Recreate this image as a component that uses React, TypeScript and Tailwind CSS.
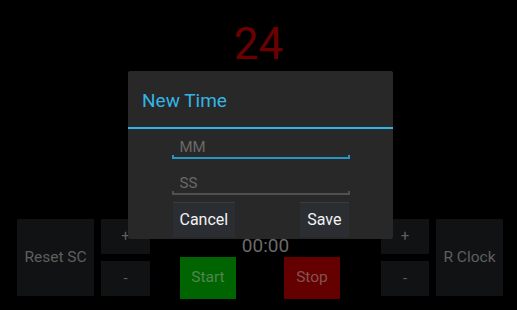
import React from "react";

const font = { fontFamily: "Roboto, 'Noto Sans', sans-serif" };

const SmallButton = ({ label }: { label: string }) => (
  <div className="flex h-[35px] w-full items-center justify-center bg-[#111213] text-[15px] text-[#5f5f5f]">
    {label}
  </div>
);

const Field = ({ hint, active }: { hint: string; active?: boolean }) => (
  <div className="w-[178px]">
    <div className="pl-[8px] text-[15px] leading-[15px] text-[#6a6a6a]">{hint}</div>
    <div
      className={`h-[4px] border-x-2 border-b-2 ${
        active ? "border-[#2596c6]" : "border-[#505050]"
      }`}
    />
  </div>
);

export default function App() {
  return (
    <div className="relative h-[310px] w-[517px] overflow-hidden bg-black" style={font}>
      <div className="flex flex-col">
        <div className="pt-[22px] text-center text-[44px] leading-none text-[#6b0000]">24</div>

        <div className="mt-[153px] flex items-start">
          <div className="ml-[17px] flex h-[77px] w-[77px] items-center justify-center bg-[#111213] text-[15.5px] text-[#5f5f5f]">
            Reset SC
          </div>
          <div className="ml-[7px] flex w-[49px] flex-col gap-[7px]">
            <SmallButton label="+" />
            <SmallButton label="-" />
          </div>

          <div className="flex w-[231px] flex-col items-center">
            <div className="mt-[17px] text-[19px] leading-[20px] text-[#6a6a6a]">00:00</div>
            <div className="mt-[1px] flex w-full justify-between pl-[30px] pr-[41px]">
              <div className="flex h-[42px] w-[56px] items-center justify-center bg-[#006400] text-[15.5px] text-[#528552]">
                Start
              </div>
              <div className="flex h-[42px] w-[56px] items-center justify-center bg-[#640000] text-[15.5px] text-[#855252]">
                Stop
              </div>
            </div>
          </div>

          <div className="flex w-[48px] flex-col gap-[7px]">
            <SmallButton label="+" />
            <SmallButton label="-" />
          </div>
          <div className="ml-[7px] flex h-[77px] w-[67px] items-center justify-center bg-[#111213] text-[15.5px] text-[#5f5f5f]">
            R Clock
          </div>
        </div>
      </div>

      {/* dialog */}
      <div className="absolute left-[128px] top-[71px] flex h-[168px] w-[265px] flex-col rounded-[2px] bg-[#282828]">
        <div className="flex h-[56px] items-center pl-[14px] pt-[2px] text-[19px] leading-none text-[#33b5e5]">
          New Time
        </div>
        <div className="h-[2px] bg-[#33b5e5]" />
        <div className="flex flex-col items-center">
          <div className="mt-[11px]">
            <Field hint="MM" active />
          </div>
          <div className="mt-[17px]">
            <Field hint="SS" />
          </div>
          <div className="mt-[7px] flex w-[176px] justify-between">
            <div className="flex h-[35px] items-center border-t border-[#3a3d40] bg-[#2a2e32] px-[7px] text-[16px] text-[#f2f2f2]">
              Cancel
            </div>
            <div className="flex h-[35px] items-center border-t border-[#3a3d40] bg-[#2a2e32] px-[7px] text-[16px] text-[#f2f2f2]">
              Save
            </div>
          </div>
        </div>
      </div>
    </div>
  );
}
